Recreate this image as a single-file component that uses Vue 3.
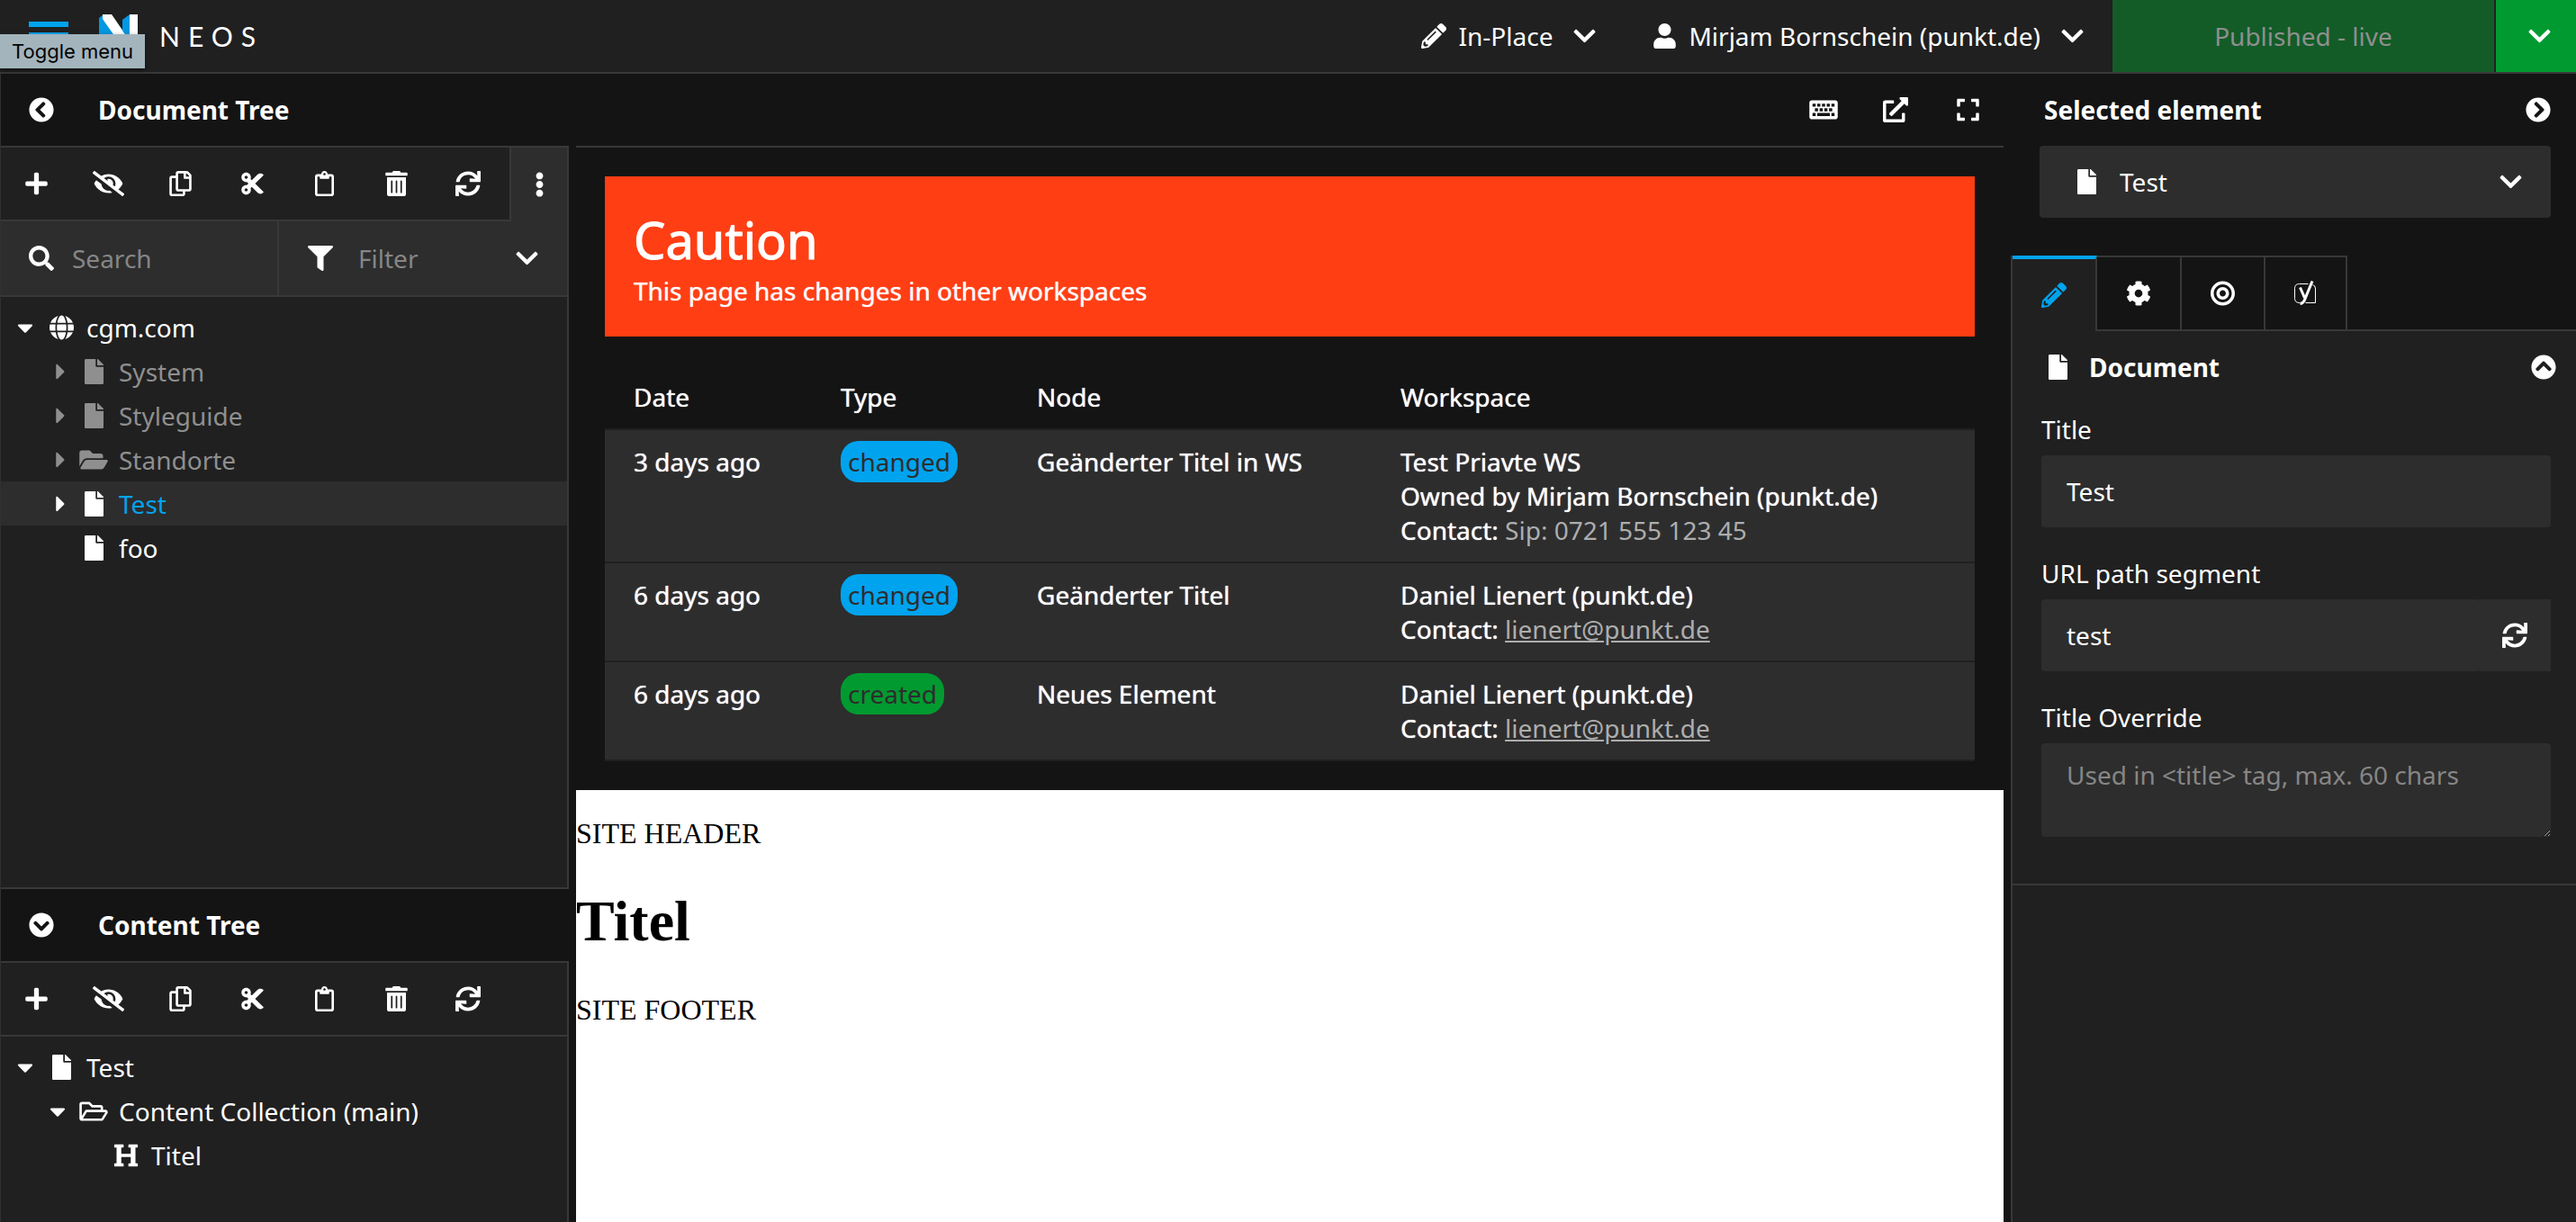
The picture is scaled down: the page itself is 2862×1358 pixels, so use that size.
<script setup>
import { h, ref } from 'vue'

const icons = {
  plus: [448, 'M416 208H272V64c0-17.67-14.33-32-32-32h-32c-17.67 0-32 14.33-32 32v144H32c-17.67 0-32 14.33-32 32v32c0 17.67 14.33 32 32 32h144v144c0 17.67 14.33 32 32 32h32c17.67 0 32-14.33 32-32V304h144c17.67 0 32-14.33 32-32v-32c0-17.67-14.33-32-32-32z'],
  eyeSlash: [640, 'M320 400c-75.85 0-137.25-58.71-142.9-133.11L72.2 185.82c-13.79 17.3-26.48 35.59-36.72 55.59a32.35 32.35 0 0 0 0 29.19C89.71 376.41 197.07 448 320 448c26.91 0 52.87-4 77.89-10.46L346 397.39a144.13 144.13 0 0 1-26 2.61zm313.82 58.1l-110.55-85.44a331.25 331.25 0 0 0 81.25-102.07 32.35 32.35 0 0 0 0-29.19C550.29 135.59 442.93 64 320 64a308.15 308.15 0 0 0-147.32 37.7L45.46 3.37A16 16 0 0 0 23 6.18L3.37 31.45A16 16 0 0 0 6.18 53.9l588.36 454.73a16 16 0 0 0 22.46-2.81l19.64-25.27a16 16 0 0 0-2.82-22.45zm-183.72-142l-39.3-30.38A94.75 94.75 0 0 0 416 256a94.76 94.76 0 0 0-121.31-92.21A47.65 47.65 0 0 1 304 192a46.64 46.64 0 0 1-1.54 10l-73.61-56.89A142.31 142.31 0 0 1 320 112a143.92 143.92 0 0 1 144 144c0 21.63-5.29 41.79-13.9 60.11z'],
  copy: [448, 'M433.941 65.941l-51.882-51.882A48 48 0 0 0 348.118 0H176c-26.51 0-48 21.49-48 48v48H48c-26.51 0-48 21.49-48 48v320c0 26.51 21.49 48 48 48h224c26.51 0 48-21.49 48-48v-48h80c26.51 0 48-21.49 48-48V99.882a48 48 0 0 0-14.059-33.941zM266 464H54a6 6 0 0 1-6-6V150a6 6 0 0 1 6-6h74v224c0 26.51 21.49 48 48 48h96v42a6 6 0 0 1-6 6zm128-96H182a6 6 0 0 1-6-6V54a6 6 0 0 1 6-6h106v88c0 13.255 10.745 24 24 24h88v202a6 6 0 0 1-6 6zm6-256h-64V48h9.632c1.591 0 3.117.632 4.243 1.757l48.368 48.368a6 6 0 0 1 1.757 4.243V112z'],
  cut: [448, 'M278.06 256L444.48 89.57c4.69-4.69 4.69-12.29 0-16.97-32.8-32.8-85.99-32.8-118.79 0L210.18 188.12l-24.86-24.86c4.31-10.92 6.68-22.81 6.68-35.26 0-53.02-42.98-96-96-96S0 74.98 0 128s42.98 96 96 96c4.54 0 8.99-.32 13.36-.93L142.29 256l-32.93 32.93c-4.37-.61-8.83-.93-13.36-.93-53.02 0-96 42.98-96 96s42.98 96 96 96 96-42.98 96-96c0-12.45-2.37-24.34-6.68-35.26l24.86-24.86L325.69 439.4c32.8 32.8 85.99 32.8 118.79 0 4.69-4.68 4.69-12.28 0-16.97L278.06 256zM96 160c-17.64 0-32-14.36-32-32s14.36-32 32-32 32 14.36 32 32-14.36 32-32 32zm0 256c-17.64 0-32-14.36-32-32s14.36-32 32-32 32 14.36 32 32-14.36 32-32 32z'],
  clipboard: [384, 'M336 64h-80c0-35.3-28.7-64-64-64s-64 28.7-64 64H48C21.5 64 0 85.5 0 112v352c0 26.5 21.5 48 48 48h288c26.5 0 48-21.5 48-48V112c0-26.5-21.5-48-48-48zM192 40c13.3 0 24 10.7 24 24s-10.7 24-24 24-24-10.7-24-24 10.7-24 24-24zm144 418c0 3.3-2.7 6-6 6H54c-3.3 0-6-2.7-6-6V118c0-3.3 2.7-6 6-6h42v36c0 6.6 5.4 12 12 12h168c6.6 0 12-5.4 12-12v-36h42c3.3 0 6 2.7 6 6z'],
  trash: [448, 'M32 464a48 48 0 0 0 48 48h288a48 48 0 0 0 48-48V128H32zm272-256a16 16 0 0 1 32 0v224a16 16 0 0 1-32 0zm-96 0a16 16 0 0 1 32 0v224a16 16 0 0 1-32 0zm-96 0a16 16 0 0 1 32 0v224a16 16 0 0 1-32 0zM432 32H312l-9.4-18.7A24 24 0 0 0 281.1 0H166.8a23.72 23.72 0 0 0-21.4 13.3L136 32H16A16 16 0 0 0 0 48v32a16 16 0 0 0 16 16h416a16 16 0 0 0 16-16V48a16 16 0 0 0-16-16z'],
  sync: [512, 'M440.65 12.57l4 82.77A247.16 247.16 0 0 0 255.83 8C134.73 8 33.91 94.92 12.29 209.82A12 12 0 0 0 24.09 224h49.05a12 12 0 0 0 11.67-9.26 175.91 175.91 0 0 1 317-56.94l-101.46-4.86a12 12 0 0 0-12.57 12v47.41a12 12 0 0 0 12 12H500a12 12 0 0 0 12-12V12a12 12 0 0 0-12-12h-47.37a12 12 0 0 0-11.98 12.57zM255.83 432a175.61 175.61 0 0 1-146-77.8l101.8 4.87a12 12 0 0 0 12.57-12v-47.4a12 12 0 0 0-12-12H12a12 12 0 0 0-12 12V500a12 12 0 0 0 12 12h47.35a12 12 0 0 0 12-12.6l-4.15-82.57A247.17 247.17 0 0 0 255.83 504c121.11 0 221.93-86.92 243.55-201.82a12 12 0 0 0-11.8-14.18h-49.05a12 12 0 0 0-11.67 9.26A175.86 175.86 0 0 1 255.83 432z'],
  ellipsis: [192, 'M96 184c39.8 0 72 32.2 72 72s-32.2 72-72 72-72-32.2-72-72 32.2-72 72-72zM24 80c0 39.8 32.2 72 72 72s72-32.2 72-72S135.8 8 96 8 24 40.2 24 80zm0 352c0 39.8 32.2 72 72 72s72-32.2 72-72-32.2-72-72-72-72 32.2-72 72z'],
  search: [512, 'M505 442.7L405.3 343c-4.5-4.5-10.6-7-17-7H372c27.6-35.3 44-79.7 44-128C416 93.1 322.9 0 208 0S0 93.1 0 208s93.1 208 208 208c48.3 0 92.7-16.4 128-44v16.3c0 6.4 2.5 12.5 7 17l99.7 99.7c9.4 9.4 24.6 9.4 33.9 0l28.3-28.3c9.4-9.4 9.4-24.6.1-34zM208 336c-70.7 0-128-57.2-128-128 0-70.7 57.2-128 128-128 70.7 0 128 57.2 128 128 0 70.7-57.2 128-128 128z'],
  filter: [512, 'M487.976 0H24.028C2.71 0-8.047 25.866 7.058 40.971L192 225.941V432c0 7.831 3.821 15.17 10.237 19.662l80 55.98C298.02 518.69 320 507.493 320 487.98V225.941l184.947-184.97C520.021 25.896 509.338 0 487.976 0z'],
  chevron: [448, 'M207.029 381.476L12.686 187.132c-9.373-9.373-9.373-24.569 0-33.941l22.667-22.667c9.357-9.357 24.522-9.375 33.901-.04L224 284.505l154.745-154.021c9.379-9.335 24.544-9.317 33.901.04l22.667 22.667c9.373 9.373 9.373 24.569 0 33.941L240.971 381.476c-9.373 9.372-24.569 9.372-33.942 0z'],
  circleLeft: [512, 'M256 504C119 504 8 393 8 256S119 8 256 8s248 111 248 248-111 248-248 248zM142.1 273l135.5 135.5c9.4 9.4 24.6 9.4 33.9 0l17-17c9.4-9.4 9.4-24.6 0-33.9L226.9 256l101.6-101.6c9.4-9.4 9.4-24.6 0-33.9l-17-17c-9.4-9.4-24.6-9.4-33.9 0L142.1 239c-9.4 9.4-9.4 24.6 0 34z'],
  globe: [496, 'M336.5 160C322 70.7 287.8 8 248 8s-74 62.7-88.5 152h177zM152 256c0 22.2 1.2 43.5 3.3 64h185.3c2.1-20.5 3.3-41.8 3.3-64s-1.2-43.5-3.3-64H155.3c-2.1 20.5-3.3 41.8-3.3 64zm324.7-96c-28.6-67.9-86.5-120.4-158-141.6 24.4 33.8 41.2 84.7 50 141.6h108zM177.2 18.4C105.8 39.6 47.8 92.1 19.3 160h108c8.7-56.9 25.5-107.8 49.9-141.6zM487.4 192H372.7c2.1 21 3.3 42.5 3.3 64s-1.2 43-3.3 64h114.6c5.5-20.5 8.6-41.8 8.6-64s-3.1-43.5-8.5-64zM120 256c0-21.5 1.2-43 3.3-64H8.6C3.2 212.5 0 233.8 0 256s3.2 43.5 8.6 64h114.6c-2-21-3.2-42.5-3.2-64zm39.5 96c14.5 89.3 48.7 152 88.5 152s74-62.7 88.5-152h-177zm159.3 141.6c71.4-21.2 129.4-73.7 158-141.6h-108c-8.8 56.9-25.6 107.8-50 141.6zM19.3 352c28.6 67.9 86.5 120.4 158 141.6-24.4-33.8-41.2-84.7-50-141.6h-108z'],
  file: [384, 'M224 136V0H24C10.7 0 0 10.7 0 24v464c0 13.3 10.7 24 24 24h336c13.3 0 24-10.7 24-24V160H248c-13.2 0-24-10.8-24-24zm160-14.1v6.1H256V0h6.1c6.4 0 12.5 2.5 17 7l97.9 98c4.5 4.5 7 10.6 7 16.9z'],
  folderSolid: [576, 'M572.694 292.093L500.27 416.248A63.997 63.997 0 0 1 444.989 448H45.025c-18.523 0-30.064-20.093-20.731-36.093l72.424-124.155A64 64 0 0 1 152 256h399.964c18.523 0 30.064 20.093 20.73 36.093zM152 224h328v-48c0-26.51-21.49-48-48-48H272l-64-64H48C21.49 64 0 85.49 0 112v278.046l69.077-118.418C86.214 242.25 117.989 224 152 224z'],
  folderOpen: [576, 'M527.9 224H480v-48c0-26.5-21.5-48-48-48H272l-64-64H48C21.5 64 0 85.5 0 112v288c0 26.5 21.5 48 48 48h400c16.5 0 31.9-8.5 40.7-22.6l79.9-128c20-31.9-3-73.4-40.7-73.4zM48 118c0-3.3 2.7-6 6-6h134.1l64 64H426c3.3 0 6 2.7 6 6v42H152c-16.8 0-32.4 8.8-41.1 23.2L48 351.4zm400 282H72l77.2-128H528z'],
  heading: [512, 'M448 96v320h32a16 16 0 0 1 16 16v32a16 16 0 0 1-16 16H320a16 16 0 0 1-16-16v-32a16 16 0 0 1 16-16h32V288H160v128h32a16 16 0 0 1 16 16v32a16 16 0 0 1-16 16H32a16 16 0 0 1-16-16v-32a16 16 0 0 1 16-16h32V96H32a16 16 0 0 1-16-16V48a16 16 0 0 1 16-16h160a16 16 0 0 1 16 16v32a16 16 0 0 1-16 16h-32v128h192V96h-32a16 16 0 0 1-16-16V48a16 16 0 0 1 16-16h160a16 16 0 0 1 16 16v32a16 16 0 0 1-16 16z'],
  caretDown: [320, 'M31.3 192h257.3c17.8 0 26.7 21.5 14.1 34.1L174.1 354.8c-7.8 7.8-20.5 7.8-28.3 0L17.2 226.1C4.6 213.5 13.5 192 31.3 192z'],
  caretRight: [320, 'M128 384.662V127.338c0-17.818 21.543-26.741 34.142-14.142l128.662 128.662c7.81 7.81 7.81 20.474 0 28.284L162.142 398.804C149.543 411.404 128 402.48 128 384.662z'],
  pencil: [512, 'M497.9 142.1l-46.1 46.1c-4.7 4.7-12.3 4.7-17 0l-111-111c-4.7-4.7-4.7-12.3 0-17l46.1-46.1c18.7-18.7 49.1-18.7 67.9 0l60.1 60.1c18.8 18.7 18.8 49.1 0 67.9zM284.2 99.8L21.6 362.4.4 483.9c-2.9 16.4 11.4 30.6 27.8 27.8l121.5-21.3 262.6-262.6c4.7-4.7 4.7-12.3 0-17l-111-111c-4.8-4.7-12.4-4.7-17.1 0zM124.1 339.9c-5.5-5.5-5.5-14.3 0-19.8l154-154c5.5-5.5 14.3-5.5 19.8 0s5.5 14.3 0 19.8l-154 154c-5.5 5.5-14.3 5.5-19.8 0zM88 424h48v36.3l-64.5 11.3-31.1-31.1L51.7 376H88v48z'],
  user: [448, 'M224 256c70.7 0 128-57.3 128-128S294.7 0 224 0 96 57.3 96 128s57.3 128 128 128zm89.6 32h-16.7c-22.2 10.2-46.9 16-72.9 16s-50.6-5.8-72.9-16h-16.7C60.2 288 0 348.2 0 422.4V464c0 26.5 21.5 48 48 48h352c26.5 0 48-21.5 48-48v-41.6c0-74.2-60.2-134.4-134.4-134.4z'],
  cog: [512, 'M487.4 315.7l-42.6-24.6c4.3-23.2 4.3-47 0-70.2l42.6-24.6c4.9-2.8 7.1-8.6 5.5-14-11.1-35.6-30-67.8-54.7-94.6-3.8-4.1-10-5.1-14.8-2.3L380.8 110c-17.9-15.4-38.5-27.3-60.8-35.1V25.8c0-5.6-3.9-10.5-9.4-11.7-36.7-8.2-74.3-7.8-109.2 0-5.5 1.2-9.4 6.1-9.4 11.7V75c-22.2 7.9-42.8 19.8-60.8 35.1L88.7 85.5c-4.9-2.8-11-1.9-14.8 2.3-24.7 26.7-43.6 58.9-54.7 94.6-1.7 5.4.6 11.2 5.5 14L67.3 221c-4.3 23.2-4.3 47 0 70.2l-42.6 24.6c-4.9 2.8-7.1 8.6-5.5 14 11.1 35.6 30 67.8 54.7 94.6 3.8 4.1 10 5.1 14.8 2.3l42.6-24.6c17.9 15.4 38.5 27.3 60.8 35.1v49.2c0 5.6 3.9 10.5 9.4 11.7 36.7 8.2 74.3 7.8 109.2 0 5.5-1.2 9.4-6.1 9.4-11.7v-49.2c22.2-7.9 42.8-19.8 60.8-35.1l42.6 24.6c4.9 2.8 11 1.9 14.8-2.3 24.7-26.7 43.6-58.9 54.7-94.6 1.5-5.5-.7-11.3-5.6-14.1zM256 336c-44.1 0-80-35.9-80-80s35.9-80 80-80 80 35.9 80 80-35.9 80-80 80z'],
  bullseye: [496, 'M248 8C111.03 8 0 119.03 0 256s111.03 248 248 248 248-111.03 248-248S384.97 8 248 8zm0 432c-101.69 0-184-82.29-184-184 0-101.69 82.29-184 184-184 101.69 0 184 82.29 184 184 0 101.69-82.29 184-184 184zm0-312c-70.69 0-128 57.31-128 128s57.31 128 128 128 128-57.31 128-128-57.31-128-128-128zm0 192c-35.29 0-64-28.71-64-64s28.71-64 64-64 64 28.71 64 64-28.71 64-64 64z'],
  keyboard: [576, 'M528 64H48C21.5 64 0 85.5 0 112v288c0 26.5 21.5 48 48 48h480c26.5 0 48-21.5 48-48V112c0-26.5-21.5-48-48-48zM64 132h64v60H64zm96 0h64v60h-64zm96 0h64v60h-64zm96 0h64v60h-64zm96 0h64v60h-64zM112 226h64v60h-64zm96 0h64v60h-64zm96 0h64v60h-64zm96 0h64v60h-64zM64 322h64v60H64zm96 0h256v60H160zm288 0h64v60h-64z'],
  external: [512, 'M432,320H400a16,16,0,0,0-16,16V448H64V128H208a16,16,0,0,0,16-16V80a16,16,0,0,0-16-16H48A48,48,0,0,0,0,112V464a48,48,0,0,0,48,48H400a48,48,0,0,0,48-48V336A16,16,0,0,0,432,320ZM488,0h-128c-21.37,0-32.05,25.91-17,41l35.73,35.73L135,320.37a24,24,0,0,0,0,34L157.67,377a24,24,0,0,0,34,0L435.28,133.32,471,169c15,15,41,4.5,41-17V24A24,24,0,0,0,488,0Z'],
  expand: [448, 'M0 180V56c0-13.3 10.7-24 24-24h124c6.6 0 12 5.4 12 12v40c0 6.6-5.4 12-12 12H64v84c0 6.6-5.4 12-12 12H12c-6.6 0-12-5.4-12-12zM288 44v40c0 6.6 5.4 12 12 12h84v84c0 6.6 5.4 12 12 12h40c6.6 0 12-5.4 12-12V56c0-13.3-10.7-24-24-24H300c-6.6 0-12 5.4-12 12zm148 276h-40c-6.6 0-12 5.4-12 12v84h-84c-6.6 0-12 5.4-12 12v40c0 6.6 5.4 12 12 12h124c13.3 0 24-10.7 24-24V332c0-6.6-5.4-12-12-12zM160 468v-40c0-6.6-5.4-12-12-12H64v-84c0-6.6-5.4-12-12-12H12c-6.6 0-12 5.4-12 12v124c0 13.3 10.7 24 24 24h124c6.6 0 12-5.4 12-12z'],
}

const Icon = (props) => {
  const [w, d] = icons[props.name]
  return h('svg', {
    viewBox: `0 0 ${w} 512`,
    width: Math.round((28 * w) / 512),
    height: 28,
    fill: 'currentColor',
    'aria-hidden': 'true',
  }, [h('path', { d, 'fill-rule': 'evenodd' })])
}
Icon.props = ['name']

const treeTools = [
  { icon: 'plus', label: 'Create new' },
  { icon: 'eyeSlash', label: 'Hide' },
  { icon: 'copy', label: 'Copy' },
  { icon: 'cut', label: 'Cut' },
  { icon: 'clipboard', label: 'Paste' },
  { icon: 'trash', label: 'Delete' },
  { icon: 'sync', label: 'Refresh' },
]

const documents = [
  { name: 'cgm.com', icon: 'globe', caret: 'caretDown', level: 0 },
  { name: 'System', icon: 'file', caret: 'caretRight', level: 1, muted: true },
  { name: 'Styleguide', icon: 'file', caret: 'caretRight', level: 1, muted: true },
  { name: 'Standorte', icon: 'folderSolid', caret: 'caretRight', level: 1, muted: true },
  { name: 'Test', icon: 'file', caret: 'caretRight', level: 1, active: true },
  { name: 'foo', icon: 'file', level: 1 },
]

const contents = [
  { name: 'Test', icon: 'file', caret: 'caretDown', level: 0 },
  { name: 'Content Collection (main)', icon: 'folderOpen', caret: 'caretDown', level: 1 },
  { name: 'Titel', icon: 'heading', level: 2 },
]

const changes = [
  { date: '3 days ago', type: 'changed', node: 'Geänderter Titel in WS', workspace: 'Test Priavte WS', owner: 'Owned by Mirjam Bornschein (punkt.de)', phone: 'Sip: 0721 555 123 45' },
  { date: '6 days ago', type: 'changed', node: 'Geänderter Titel', workspace: 'Daniel Lienert (punkt.de)', mail: 'lienert@punkt.de' },
  { date: '6 days ago', type: 'created', node: 'Neues Element', workspace: 'Daniel Lienert (punkt.de)', mail: 'lienert@punkt.de' },
]

const title = ref('Test')
const urlSegment = ref('test')
const titleOverride = ref('')
</script>

<template>
  <div class="app">
    <header class="topbar">
      <button class="menu-toggle" type="button" aria-label="Toggle menu">
        <svg width="44" height="32" viewBox="0 0 44 32" fill="currentColor" aria-hidden="true">
          <path d="M0 0h44v6H0zM0 12h44v6H0zM0 24h44v6H0z" />
        </svg>
        <span class="tooltip" role="tooltip">Toggle menu</span>
      </button>
      <a class="brand" href="#">
        <svg width="43" height="48" viewBox="0 0 43 48" aria-hidden="true">
          <path fill="#0098e2" d="M0 4L5 0L29 34V48H13L9 44V30L8 48H0z" />
          <path fill="#fff" d="M4 0H14L34 29V0H43V44L38 48H34L4 5z" />
          <path fill="#0098e2" d="M26 6L34 0V29L26 18z" />
        </svg>
        <span class="wordmark">NEOS</span>
      </a>
      <button class="top-menu push" type="button" aria-haspopup="true">
        <Icon name="pencil" /><span>In-Place</span><Icon name="chevron" class="caret" />
      </button>
      <button class="top-menu" type="button" aria-haspopup="true">
        <Icon name="user" /><span>Mirjam Bornschein (punkt.de)</span><Icon name="chevron" class="caret" />
      </button>
      <div class="publish">
        <button class="publish-main" type="button" disabled>Published - live</button>
        <button class="publish-more" type="button" aria-label="Publish options"><Icon name="chevron" /></button>
      </div>
    </header>

    <div class="workspace">
      <aside class="sidebar">
        <section class="panel panel-documents">
          <div class="panel-head">
            <button type="button" class="bare" aria-label="Collapse"><Icon name="circleLeft" /></button>
            <h2>Document Tree</h2>
          </div>
          <div class="panel-body">
            <div class="toolbar">
              <div class="tools">
                <button v-for="t in treeTools" :key="t.icon" type="button" class="tool" :aria-label="t.label"><Icon :name="t.icon" /></button>
              </div>
              <button type="button" class="more" aria-label="More"><Icon name="ellipsis" /></button>
            </div>
            <div class="filters">
              <label class="search">
                <Icon name="search" />
                <input type="search" placeholder="Search" aria-label="Search" />
              </label>
              <label class="filter">
                <Icon name="filter" />
                <select aria-label="Filter"><option>Filter</option></select>
                <Icon name="chevron" />
              </label>
            </div>
            <ul class="tree">
              <li v-for="n in documents" :key="n.name" class="node" :class="{ muted: n.muted, active: n.active }">
                <span v-for="i in n.level" :key="i" class="indent"></span>
                <span class="caret-box"><Icon v-if="n.caret" :name="n.caret" /></span>
                <span class="icon-box"><Icon :name="n.icon" /></span>
                <a href="#">{{ n.name }}</a>
              </li>
            </ul>
          </div>
        </section>

        <section class="panel panel-content">
          <div class="panel-head">
            <button type="button" class="bare" aria-label="Collapse"><Icon name="circleLeft" class="point-down" /></button>
            <h2>Content Tree</h2>
          </div>
          <div class="panel-body">
            <div class="toolbar">
              <div class="tools plain">
                <button v-for="t in treeTools" :key="t.icon" type="button" class="tool" :aria-label="t.label"><Icon :name="t.icon" /></button>
              </div>
            </div>
            <ul class="tree">
              <li v-for="n in contents" :key="n.name" class="node">
                <span v-for="i in n.level" :key="i" class="indent"></span>
                <span class="caret-box"><Icon v-if="n.caret" :name="n.caret" /></span>
                <span class="icon-box"><Icon :name="n.icon" /></span>
                <a href="#">{{ n.name }}</a>
              </li>
            </ul>
          </div>
        </section>
      </aside>

      <main class="content">
        <div class="content-head">
          <button type="button" class="tool" aria-label="Keyboard shortcuts"><Icon name="keyboard" /></button>
          <button type="button" class="tool" aria-label="Open preview"><Icon name="external" /></button>
          <button type="button" class="tool" aria-label="Full screen"><Icon name="expand" /></button>
        </div>
        <div class="notice">
          <div class="caution">
            <h1>Caution</h1>
            <p>This page has changes in other workspaces</p>
          </div>
          <table class="changes">
            <colgroup><col class="c-date" /><col class="c-type" /><col class="c-node" /><col /></colgroup>
            <thead>
              <tr><th>Date</th><th>Type</th><th>Node</th><th>Workspace</th></tr>
            </thead>
            <tbody>
              <tr v-for="(c, i) in changes" :key="i">
                <td>{{ c.date }}</td>
                <td><span class="badge" :class="c.type">{{ c.type }}</span></td>
                <td>{{ c.node }}</td>
                <td>
                  <div>{{ c.workspace }}</div>
                  <div v-if="c.owner">{{ c.owner }}</div>
                  <div>Contact:
                    <span v-if="c.phone" class="phone">{{ c.phone }}</span>
                    <a v-else class="mail" :href="'mailto:' + c.mail">{{ c.mail }}</a>
                  </div>
                </td>
              </tr>
            </tbody>
          </table>
        </div>
        <article class="site">
          <p>SITE HEADER</p>
          <h1>Titel</h1>
          <p>SITE FOOTER</p>
        </article>
      </main>

      <aside class="inspector">
        <div class="inspector-head">
          <h2>Selected element</h2>
          <button type="button" class="bare" aria-label="Collapse inspector"><Icon name="circleLeft" class="point-right" /></button>
        </div>
        <label class="element-select">
          <Icon name="file" />
          <select aria-label="Selected element"><option>Test</option></select>
          <Icon name="chevron" />
        </label>
        <div class="inspector-body">
          <div class="tabs" role="tablist">
            <button type="button" role="tab" class="tab current" aria-selected="true" aria-label="General"><Icon name="pencil" /></button>
            <button type="button" role="tab" class="tab" aria-label="Settings"><Icon name="cog" /></button>
            <button type="button" role="tab" class="tab" aria-label="Focus"><Icon name="bullseye" /></button>
            <button type="button" role="tab" class="tab" aria-label="SEO">
              <svg width="25" height="28" viewBox="0 0 25 28" fill="none" stroke="currentColor" aria-hidden="true">
                <path stroke-width="1" d="M15.5 3.5H5.5Q.5 3.500.5 8.500V19.500Q.5 24.500 6 24.500M20.500 4.500Q23.500 5 23.500 9V24.500H12.500" />
                <path stroke-width="3" d="M6.500 7.500L11.500 19" />
                <path stroke-width="3" d="M20 .5L12 20Q10.500 25 6.500 25.500" />
              </svg>
            </button>
            <span class="tab-rest"></span>
          </div>
          <section class="group">
            <div class="group-head">
              <Icon name="file" />
              <h3>Document</h3>
              <button type="button" class="bare" aria-label="Collapse group"><Icon name="circleLeft" class="point-up" /></button>
            </div>
            <div class="fields">
              <div class="field">
                <label for="f-title">Title</label>
                <input id="f-title" v-model="title" type="text" />
              </div>
              <div class="field">
                <label for="f-url">URL path segment</label>
                <div class="with-action">
                  <input id="f-url" v-model="urlSegment" type="text" />
                  <button type="button" aria-label="Regenerate"><Icon name="sync" /></button>
                </div>
              </div>
              <div class="field">
                <label for="f-override">Title Override</label>
                <textarea id="f-override" v-model="titleOverride" placeholder="Used in &lt;title&gt; tag, max. 60 chars"></textarea>
              </div>
            </div>
          </section>
        </div>
      </aside>
    </div>
  </div>
</template>

<style>
body {
  background: #141414;
}
</style>

<style scoped>
.app {
  display: flex;
  flex-direction: column;
  min-height: 100vh;
  color: #fff;
  background: #141414;
  font-family: "Noto Sans", "Open Sans", sans-serif;
  font-size: 28px;
  line-height: 38px;
}
.app *,
.app *::before {
  box-sizing: border-box;
}
button,
input,
select,
textarea {
  margin: 0;
  padding: 0;
  border: 0;
  border-radius: 0;
  outline: 0;
  background: none;
  color: inherit;
  font: inherit;
}
select,
input {
  appearance: none;
  min-width: 0;
}
h1, h2, h3, p, ul {
  margin: 0;
  padding: 0;
}
h2, h3 {
  font-size: 28px;
  font-weight: 700;
}
a {
  color: inherit;
  text-decoration: none;
}
svg {
  display: block;
  flex: none;
}
.bare {
  display: flex;
}
.point-down { transform: rotate(-90deg); }
.point-right { transform: rotate(180deg); }
.point-up { transform: rotate(90deg); }

.topbar {
  display: flex;
  align-items: center;
  height: 82px;
  padding-left: 32px;
  background: #202020;
  border-bottom: 2px solid #383838;
  position: relative;
}
.menu-toggle {
  color: #00a3ee;
}
.tooltip {
  position: absolute;
  left: 0;
  top: 38px;
  z-index: 2;
  padding: 0 13px;
  background: #a3b4bd;
  box-shadow: 0 2px 6px rgba(0, 0, 0, 0.4);
  color: #000;
  font-family: Inter, sans-serif;
  font-size: 22px;
  line-height: 38px;
}
.brand {
  display: flex;
  align-items: center;
  gap: 24px;
  margin-left: 34px;
}
.wordmark {
  font-family: Lato, sans-serif;
  font-size: 30px;
  letter-spacing: 9px;
}
.top-menu {
  display: flex;
  align-items: center;
  gap: 14px;
  height: 80px;
  padding: 0 32px;
}
.push {
  margin-left: auto;
}
.top-menu .caret {
  margin-left: 9px;
}
.publish {
  display: flex;
  gap: 2px;
  height: 80px;
}
.publish-main {
  width: 424px;
  background: #135c27;
  color: #8f8f8f;
}
.publish-more {
  display: flex;
  align-items: center;
  padding: 0 28px 0 36px;
  background: #009a30;
}

.workspace {
  display: flex;
  flex: 1;
  gap: 8px;
}
.sidebar {
  position: relative;
  display: flex;
  flex-direction: column;
  flex: 0 0 632px;
}
.sidebar::before {
  content: "";
  position: absolute;
  inset: 0 auto 0 0;
  width: 1px;
  background: #303030;
}
.panel {
  display: flex;
  flex-direction: column;
}
.panel-documents {
  flex: 1;
}
.panel-content {
  flex: 0 0 370px;
}
.panel-head {
  display: flex;
  align-items: center;
  gap: 49px;
  height: 80px;
  padding-left: 32px;
}
.panel-body {
  flex: 1;
  background: #202020;
  border-top: 2px solid #383838;
  border-right: 2px solid #383838;
}
.panel-documents .panel-body {
  border-bottom: 2px solid #383838;
}
.toolbar {
  display: flex;
}
.tools {
  display: flex;
  flex: 1;
  height: 82px;
  border-right: 2px solid #383838;
  border-bottom: 2px solid #383838;
}
.tools.plain {
  border-right: 0;
}
.tool {
  display: grid;
  place-items: center;
  width: 80px;
  height: 80px;
}
.more {
  display: grid;
  place-items: center;
  width: 62px;
  background: #2d2d2d;
}
.filters {
  display: flex;
  height: 84px;
  background: #2d2d2d;
  border-bottom: 2px solid #383838;
}
.search,
.filter {
  display: flex;
  align-items: center;
  gap: 20px;
}
.search {
  width: 310px;
  padding-left: 32px;
  border-right: 2px solid #383838;
}
.search input {
  flex: 1;
}
.search input::placeholder,
.field textarea::placeholder {
  color: #868686;
  opacity: 1;
}
.filter {
  flex: 1;
  gap: 28px;
  padding: 0 32px;
}
.filter select {
  flex: 1;
  color: #868686;
}
.tree {
  padding-top: 9px;
  list-style: none;
}
.node {
  display: flex;
  align-items: center;
  height: 49px;
  padding-left: 18px;
}
.node.active {
  background: #2d2d2d;
}
.node.active a {
  color: #00a3ee;
}
.node.muted {
  color: #8f8f8f;
}
.indent {
  width: 36px;
}
.caret-box,
.icon-box {
  display: flex;
  justify-content: center;
  width: 20px;
}
.icon-box {
  width: 40px;
  margin: 0 8px 0 10px;
}

.content {
  display: flex;
  flex: 1;
  flex-direction: column;
  min-width: 0;
}
.content-head {
  display: flex;
  justify-content: flex-end;
  height: 82px;
  border-bottom: 2px solid #383838;
}
.notice {
  padding: 32px;
  text-shadow: 0 0 1px currentColor;
}
.caution {
  padding: 32px;
  background: #ff3e14;
}
.caution h1 {
  font-size: 56px;
  font-weight: 400;
  line-height: 76px;
  -webkit-text-stroke: 1px currentColor;
}
.changes {
  width: 100%;
  margin-top: 32px;
  border-collapse: collapse;
  table-layout: fixed;
  text-align: left;
}
.c-date { width: 230px; }
.c-type { width: 218px; }
.c-node { width: 404px; }
.changes th,
.changes td {
  padding: 16px 0 16px 32px;
  border-bottom: 2px solid #202020;
  font-weight: 400;
  vertical-align: top;
}
.changes td {
  background: #2d2d2d;
}
.badge {
  padding: 4px 8px;
  border-radius: 20px;
  color: #2d2d2d;
  text-shadow: none;
}
.badge.changed { background: #00a3ee; }
.badge.created { background: #009a30; }
.phone,
.mail {
  color: #adadad;
  text-shadow: none;
}
.mail {
  text-decoration: underline;
}
.site {
  flex: 1;
  padding-top: 30px;
  background: #fff;
  color: #000;
  font-family: "Liberation Serif", serif;
  font-size: 32px;
  line-height: 36px;
}
.site h1 {
  margin: 43px 0;
  font-size: 64px;
  font-weight: 700;
  line-height: 74px;
}

.inspector {
  display: flex;
  flex-direction: column;
  flex: 0 0 628px;
}
.inspector-head {
  display: flex;
  align-items: center;
  justify-content: space-between;
  height: 80px;
  padding: 0 28px 0 37px;
}
.element-select {
  display: flex;
  align-items: center;
  gap: 26px;
  height: 80px;
  margin: 0 28px 42px 32px;
  padding: 0 32px 0 42px;
  border-radius: 4px;
  background: #2d2d2d;
}
.element-select select {
  flex: 1;
}
.inspector-body {
  flex: 1;
  background: #202020;
  border-left: 2px solid #383838;
}
.tabs {
  display: flex;
  height: 84px;
  background: #141414;
}
.tab {
  display: flex;
  align-items: center;
  padding: 0 32px;
  border: 2px solid #383838;
  border-left: 0;
}
.tab.current {
  background: #202020;
  border-top: 4px solid #00a3ee;
  border-bottom: 0;
  color: #00a3ee;
}
.tab-rest {
  flex: 1;
  border-bottom: 2px solid #383838;
}
.group {
  border-bottom: 2px solid #383838;
}
.group-head {
  display: flex;
  align-items: center;
  gap: 24px;
  height: 80px;
  padding: 0 22px 0 40px;
}
.group-head .bare {
  margin-left: auto;
}
.fields {
  display: flex;
  flex-direction: column;
  gap: 32px;
  padding: 10px 28px 52px 32px;
}
.field {
  display: flex;
  flex-direction: column;
  gap: 10px;
}
.field input,
.field textarea {
  width: 100%;
  height: 80px;
  padding: 0 28px;
  border-radius: 4px;
  background: #2d2d2d;
}
.field textarea {
  display: block;
  height: 104px;
  padding: 16px 28px;
  resize: vertical;
}
.with-action {
  display: flex;
}
.with-action button {
  display: grid;
  place-items: center;
  flex: none;
  width: 80px;
  background: #2d2d2d;
}
</style>
